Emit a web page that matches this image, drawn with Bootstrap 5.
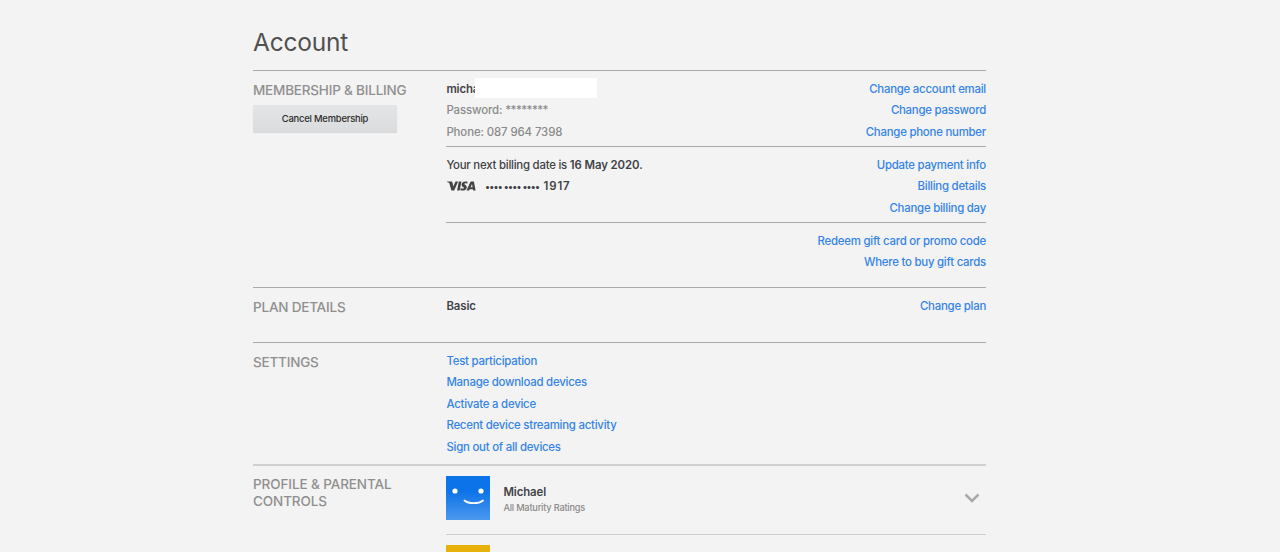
<!DOCTYPE html>
<html lang="en">
  <head>
    <meta charset="UTF-8" />
    <meta name="viewport" content="width=device-width, initial-scale=1.0" />
    <title>Account</title>
    <link
      href="https://cdn.jsdelivr.net/npm/bootstrap@5.3.0/dist/css/bootstrap.min.css"
      rel="stylesheet"
    />
    <style>
      body {
        background: #f3f3f3;
        color: #424246;
        font-family: Inter, "Liberation Sans", sans-serif;
        font-size: 11.4px;
        font-weight: 450;
        letter-spacing: -0.23px;
        line-height: 21.5px;
      }
      a {
        color: #3384e6;
        text-decoration: none;
      }
      b {
        font-weight: 600;
        letter-spacing: -0.1px;
      }
      .account-page {
        width: 733px;
        height: 552px;
        margin-left: 253px;
        padding-top: 24px;
      }
      .account-title {
        font-size: 24.5px;
        font-weight: 400;
        line-height: 36px;
        height: 46px;
        margin: 0;
        color: #505050;
      }
      .account-section {
        border-top: 1px solid #a9a9a9;
      }
      .section-side {
        width: 193.4px;
        flex: none;
        padding-top: 11px;
      }
      .section-side h2 {
        font-size: 13.5px;
        font-weight: 450;
        letter-spacing: -0.2px;
        line-height: 16.5px;
        margin: 0;
        color: #8f8f8f;
      }
      .section-part {
        padding-top: 7.5px;
      }
      .section-part + .section-part {
        border-top: 1px solid #a9a9a9;
      }
      .part-tall {
        height: 75px;
      }
      .section-part + .part-tall {
        height: 76px;
      }
      .membership {
        height: 217px;
      }
      .plan {
        height: 55px;
      }
      .settings {
        height: 122px;
      }
      .profiles {
        border-top: 2px solid #d0d0d0;
        height: 88px;
      }
      .profiles .section-side {
        padding-top: 10px;
      }
      .profiles h2 {
        letter-spacing: -0.1px;
      }
      .btn-cancel {
        width: 144px;
        height: 27px;
        margin-top: 6px;
        padding: 0;
        border: 0;
        border-radius: 1px;
        background: linear-gradient(#e4e5e6, #dbdcdd);
        box-shadow: 0 1px 1px rgba(0, 0, 0, 0.12);
        color: #2a2a2a;
        font-size: 9.4px;
        font-weight: 500;
        letter-spacing: -0.2px;
        line-height: 27px;
      }
      .quiet {
        color: #8a8a8a;
        letter-spacing: -0.1px;
      }
      .password-stars {
        letter-spacing: -0.6px;
      }
      .email-line {
        position: relative;
      }
      .email-cover {
        position: absolute;
        left: 29px;
        top: -1px;
        width: 121.5px;
        height: 20px;
        background: #fff;
      }
      .visa-logo {
        display: block;
        width: 30px;
        height: 10px;
        margin-left: -0.4px;
        margin-right: 9px;
        margin-top: -1px;
      }
      .card-dots {
        font-size: 9.8px;
        letter-spacing: -0.7px;
        width: 58.5px;
        white-space: nowrap;
        margin-top: -1px;
      }
      .card-digits {
        letter-spacing: 0.9px;
      }
      .profile-item {
        height: 68px;
        padding-top: 10px;
      }
      .profile-item + .profile-item {
        border-top: 1px solid #cdcdcd;
        height: 20px;
        overflow: hidden;
      }
      .avatar {
        display: block;
        width: 44px;
        height: 44px;
        flex: none;
      }
      .profile-text {
        margin-left: 13px;
        line-height: 16px;
        padding-top: 8px;
      }
      .profile-text small {
        display: block;
        font-size: 9.2px;
        letter-spacing: -0.2px;
        line-height: 15px;
      }
      .chevron {
        width: 16px;
        height: 10px;
        margin: 17px 6px 0 auto;
      }
    </style>
  </head>

  <body>
    <div class="account-page">
      <h1 class="account-title">Account</h1>

      <!-- Membership -->
      <section class="account-section membership d-flex">
        <div class="section-side">
          <h2>MEMBERSHIP &amp; BILLING</h2>
          <button type="button" class="btn btn-cancel">Cancel Membership</button>
        </div>
        <div class="flex-grow-1">
          <div class="section-part part-tall d-flex justify-content-between">
            <div>
              <div class="email-line"><b>micha</b><span class="email-cover"></span></div>
              <div class="quiet">Password: <span class="password-stars">********</span></div>
              <div class="quiet">Phone: 087 964 7398</div>
            </div>
            <div class="d-flex flex-column text-end">
              <a href="#">Change account email</a>
              <a href="#">Change password</a>
              <a href="#">Change phone number</a>
            </div>
          </div>
          <div class="section-part part-tall d-flex justify-content-between">
            <div>
              <div>Your next billing date is <b>16 May 2020</b>.</div>
              <div class="d-flex align-items-center">
                <svg class="visa-logo" viewBox="0 0 30 10" fill="#444">
                  <path d="M1 .5h4.2c.7 0 1.1.3 1.3 1l.8 4L9.500 .5h2.600L8.200 9.500H5.400L3.400 2.400C3 1.600 2 1.200 1 1z" />
                  <path d="M12.800 .5h2.600l-1.700 9h-2.600z" />
                  <path d="M21.600 .8l-.4 2c-1.300-.6-2.900-.6-2.900.1 0 .8 2.700 1.100 2.500 3.500-.2 2.700-3.300 3.800-6.400 2.800l.4-2.100c1.400.7 3.200.7 3.300-.2 0-.9-2.600-1-2.500-3.400.1-2.700 3.200-3.800 6-2.700z" />
                  <path fill-rule="evenodd" d="M25.400 .5h2.500l1.700 9h-2.400l-.3-1.300h-3.200l-.6 1.300h-2.600L24.200 1.300c.2-.5.6-.8 1.200-.8zm.6 2.500l-1.300 3.300h1.900z" />
                </svg>
                <b class="card-dots">•••• •••• ••••</b>
                <b class="card-digits">1917</b>
              </div>
            </div>
            <div class="d-flex flex-column text-end">
              <a href="#">Update payment info</a>
              <a href="#">Billing details</a>
              <a href="#">Change billing day</a>
            </div>
          </div>
          <div class="section-part d-flex flex-column align-items-end">
            <a href="#">Redeem gift card or promo code</a>
            <a href="#">Where to buy gift cards</a>
          </div>
        </div>
      </section>

      <!-- Plan -->
      <section class="account-section plan d-flex">
        <div class="section-side"><h2>PLAN DETAILS</h2></div>
        <div class="section-part flex-grow-1 d-flex justify-content-between">
          <b>Basic</b>
          <a href="#">Change plan</a>
        </div>
      </section>

      <!-- Settings -->
      <section class="account-section settings d-flex">
        <div class="section-side"><h2>SETTINGS</h2></div>
        <div class="section-part d-flex flex-column">
          <a href="#">Test participation</a>
          <a href="#">Manage download devices</a>
          <a href="#">Activate a device</a>
          <a href="#">Recent device streaming activity</a>
          <a href="#">Sign out of all devices</a>
        </div>
      </section>

      <!-- Profiles -->
      <section class="account-section profiles d-flex">
        <div class="section-side"><h2>PROFILE &amp; PARENTAL<br />CONTROLS</h2></div>
        <div class="flex-grow-1">
          <div class="profile-item d-flex align-items-start">
            <svg class="avatar" viewBox="0 0 44 44">
              <defs>
                <linearGradient id="blueFade" x1="0" y1="0" x2="0" y2="1">
                  <stop offset="0.35" stop-color="#0d73e8" />
                  <stop offset="1" stop-color="#4c98ee" />
                </linearGradient>
              </defs>
              <rect width="44" height="44" fill="url(#blueFade)" />
              <circle cx="9" cy="15" r="2.600" fill="#fff" />
              <circle cx="35" cy="15" r="2.600" fill="#fff" />
              <path d="M18.500 24.500c4 3.600 14 3.600 18.500 0" fill="none" stroke="#fff" stroke-width="1.800" stroke-linecap="round" />
            </svg>
            <div class="profile-text">
              <b>Michael</b>
              <small class="quiet">All Maturity Ratings</small>
            </div>
            <svg class="chevron" viewBox="0 0 16 10" fill="none" stroke="#aaa" stroke-width="2.500">
              <path d="M1.500 1.500L8 8l6.500-6.500" />
            </svg>
          </div>
          <div class="profile-item d-flex align-items-start">
            <svg class="avatar" viewBox="0 0 44 44">
              <rect width="44" height="44" fill="#e8b10c" />
            </svg>
          </div>
        </div>
      </section>
    </div>

    <script src="https://cdn.jsdelivr.net/npm/bootstrap@5.3.0/dist/js/bootstrap.bundle.min.js"></script>
  </body>
</html>
